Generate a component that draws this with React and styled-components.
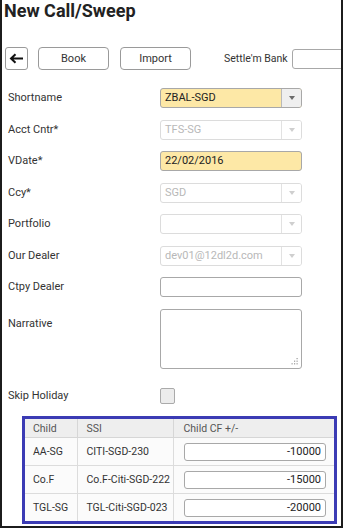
import React from 'react';
import styled, { createGlobalStyle } from 'styled-components';

const GlobalStyle = createGlobalStyle`
  body {
    margin: 0;
    background: #fff;
    font-family: Roboto, "Liberation Sans", Arial, sans-serif;
    color: #333;
  }
`;

const Frame = styled.div`
  box-sizing: border-box;
  width: 343px;
  height: 528px;
  border: 2px solid #1c1c1c;
  border-top: none;
  overflow: hidden;
  background: #fff;
`;

const Title = styled.h1`
  margin: 0;
  padding-left: 2px;
  font-size: 18px;
  line-height: 22px;
  font-weight: 700;
  color: #222;
  white-space: nowrap;
`;

const Toolbar = styled.div`
  display: flex;
  align-items: center;
  margin-top: 25px;
  padding-left: 3px;
  height: 23px;
  white-space: nowrap;
  & > * { flex-shrink: 0; }
`;

const BackButton = styled.button`
  box-sizing: border-box;
  width: 23px;
  height: 23px;
  padding: 0;
  display: flex;
  align-items: center;
  justify-content: center;
  background: #fff;
  border: 1px solid #9a9a9a;
  border-radius: 3px;
  margin-right: 10px;
`;

const ActionButton = styled.button`
  box-sizing: border-box;
  width: 71px;
  height: 23px;
  padding: 0;
  background: #fff;
  border: 1px solid #9a9a9a;
  border-radius: 4px;
  font-family: inherit;
  font-size: 11px;
  color: #333;
  margin-right: ${(p) => p.$gap || 0}px;
`;

const BankLabel = styled.span`
  font-size: 10.5px;
  color: #333;
  margin-right: 4px;
`;

const BankInput = styled.div`
  box-sizing: border-box;
  width: 80px;
  height: 20px;
  border: 1px solid #a8a8a8;
  border-radius: 3px;
  background: #fff;
`;

const Form = styled.div`
  display: flex;
  flex-direction: column;
  gap: 11.5px;
  margin-top: 18px;
  padding-left: 6px;
`;

const FormRow = styled.div`
  display: flex;
  align-items: ${(p) => (p.$top ? 'flex-start' : 'center')};
  min-height: 20px;
  margin-top: ${(p) => p.$shift || 0}px;
`;

const Label = styled.div`
  flex: 0 0 152px;
  font-size: 11px;
  line-height: 20px;
  color: #333;
  padding-top: ${(p) => p.$pad || 0}px;
  white-space: nowrap;
`;

const Field = styled.div`
  box-sizing: border-box;
  display: flex;
  align-items: stretch;
  width: 142px;
  height: 20px;
  border: 1px solid ${(p) => (p.$disabled ? '#dcdcdc' : '#a8a8a8')};
  border-radius: 3px;
  background: ${(p) => (p.$highlight ? '#fde8a6' : '#fff')};
  overflow: hidden;
`;

const FieldText = styled.span`
  flex: 1;
  padding-left: 4px;
  font-size: 11px;
  line-height: 18px;
  color: ${(p) => (p.$disabled ? '#b8b8b8' : '#222')};
`;

const Toggle = styled.span`
  flex: 0 0 19px;
  display: flex;
  align-items: center;
  justify-content: center;
  border-left: 1px solid ${(p) => (p.$disabled ? '#e2e2e2' : '#b9b9b9')};
  background: ${(p) => (p.$disabled ? '#fff' : '#efefef')};
`;

const Caret = styled.span`
  width: 0;
  height: 0;
  border-left: 3.5px solid transparent;
  border-right: 3.5px solid transparent;
  border-top: 4px solid ${(p) => (p.$disabled ? '#cfcfcf' : '#6a6a6a')};
`;

const AreaBox = styled.div`
  position: relative;
  box-sizing: border-box;
  width: 142px;
  height: 60px;
  border: 1px solid #a8a8a8;
  border-radius: 3px;
  background: #fff;
`;

const Grip = styled.svg`
  position: absolute;
  right: 3px;
  bottom: 3px;
`;

const CheckBox = styled.div`
  box-sizing: border-box;
  width: 15px;
  height: 16px;
  border: 1px solid #aaa;
  border-radius: 2px;
  background: #ececec;
`;

const ChildPanel = styled.div`
  box-sizing: border-box;
  width: 315px;
  margin: 10px 0 0 20px;
  border: 3px solid #3b3bb4;
`;

const Table = styled.table`
  width: 100%;
  border-collapse: collapse;
  table-layout: fixed;
  font-size: 10.5px;
`;

const Th = styled.th`
  height: 18px;
  padding: 0 0 0 ${(p) => p.$pad || 8}px;
  text-align: left;
  font-weight: 400;
  color: #555;
  background: #eeeeee;
  border-right: 1px solid #d6d6d6;
  border-bottom: 1px solid #d6d6d6;
  &:last-child { border-right: none; }
`;

const Td = styled.td`
  height: 27px;
  padding: 0 ${(p) => (p.$input ? 8 : 0)}px 0 ${(p) => p.$pad || 8}px;
  color: #333;
  background: #fbfbfb;
  border-right: 1px solid #dcdcdc;
  border-bottom: 1px solid #dcdcdc;
  white-space: nowrap;
  &:last-child { border-right: none; }
`;

const Row = styled.tr`
  &:last-child td { border-bottom: none; }
`;

const Amount = styled.div`
  box-sizing: border-box;
  height: 18px;
  padding-right: 4px;
  border: 1px solid #a8a8a8;
  border-radius: 3px;
  background: #fff;
  text-align: right;
  font-size: 11px;
  line-height: 16px;
  color: #222;
`;

const Select = ({ value, disabled, highlight }) => (
  <Field $disabled={disabled} $highlight={highlight}>
    <FieldText $disabled={disabled}>{value}</FieldText>
    <Toggle $disabled={disabled}>
      <Caret $disabled={disabled} />
    </Toggle>
  </Field>
);

const Text = ({ value, highlight }) => (
  <Field $highlight={highlight}>
    <FieldText>{value}</FieldText>
  </Field>
);

const children = [
  { child: 'AA-SG', ssi: 'CITI-SGD-230', cf: '-10000' },
  { child: 'Co.F', ssi: 'Co.F-Citi-SGD-222', cf: '-15000' },
  { child: 'TGL-SG', ssi: 'TGL-Citi-SGD-023', cf: '-20000' },
];

export default function App() {
  return (
    <Frame>
      <GlobalStyle />
      <Title>New Call/Sweep</Title>

      <Toolbar>
        <BackButton aria-label="Back">
          <svg width="15" height="11" viewBox="0 0 15 11">
            <path d="M14 5.5H2.5M6.5 1.2L2 5.5l4.5 4.3" fill="none" stroke="#111" strokeWidth="2" />
          </svg>
        </BackButton>
        <ActionButton $gap={11}>Book</ActionButton>
        <ActionButton $gap={33}>Import</ActionButton>
        <BankLabel>Settle'm Bank</BankLabel>
        <BankInput />
      </Toolbar>

      <Form>
        <FormRow>
          <Label>Shortname</Label>
          <Select value="ZBAL-SGD" highlight />
        </FormRow>
        <FormRow>
          <Label>Acct Cntr*</Label>
          <Select value="TFS-SG" disabled />
        </FormRow>
        <FormRow>
          <Label>VDate*</Label>
          <Text value="22/02/2016" highlight />
        </FormRow>
        <FormRow>
          <Label>Ccy*</Label>
          <Select value="SGD" disabled />
        </FormRow>
        <FormRow>
          <Label>Portfolio</Label>
          <Select value="" disabled />
        </FormRow>
        <FormRow>
          <Label>Our Dealer</Label>
          <Select value="dev01@12dl2d.com" disabled />
        </FormRow>
        <FormRow>
          <Label>Ctpy Dealer</Label>
          <Text value="" />
        </FormRow>
        <FormRow $top>
          <Label $pad={5}>Narrative</Label>
          <AreaBox>
            <Grip width="7" height="7" viewBox="0 0 7 7">
              <g fill="#9a9a9a">
                <rect x="5.5" y="0" width="1.2" height="1.2" />
                <rect x="3" y="2.6" width="1.2" height="1.2" />
                <rect x="5.5" y="2.6" width="1.2" height="1.2" />
                <rect x="0.5" y="5.2" width="1.2" height="1.2" />
                <rect x="3" y="5.2" width="1.2" height="1.2" />
                <rect x="5.5" y="5.2" width="1.2" height="1.2" />
              </g>
            </Grip>
          </AreaBox>
        </FormRow>
        <FormRow $shift={6}>
          <Label>Skip Holiday</Label>
          <CheckBox />
        </FormRow>
      </Form>

      <ChildPanel>
        <Table>
          <colgroup>
            <col style={{ width: 52 }} />
            <col style={{ width: 96 }} />
            <col />
          </colgroup>
          <thead>
            <tr>
              <Th>Child</Th>
              <Th $pad={9}>SSI</Th>
              <Th $pad={10}>Child CF +/-</Th>
            </tr>
          </thead>
          <tbody>
            {children.map((c) => (
              <Row key={c.child}>
                <Td>{c.child}</Td>
                <Td $pad={9}>{c.ssi}</Td>
                <Td $pad={10} $input>
                  <Amount>{c.cf}</Amount>
                </Td>
              </Row>
            ))}
          </tbody>
        </Table>
      </ChildPanel>
    </Frame>
  );
}
